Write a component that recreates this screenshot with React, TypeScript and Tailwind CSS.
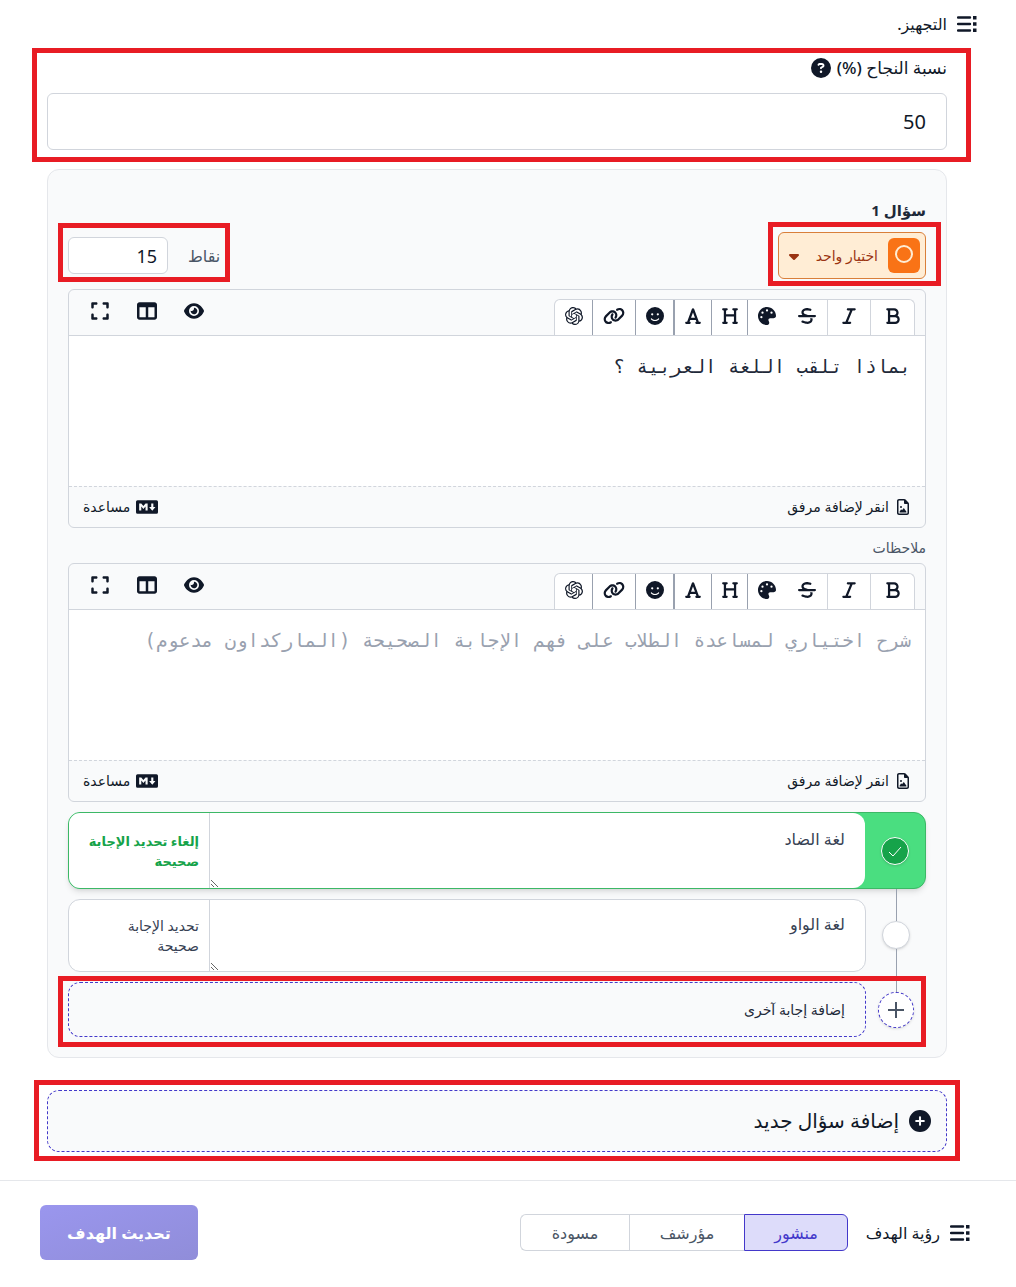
import { useState } from 'react'
import {
  FaBold,
  FaCaretDown,
  FaCirclePlus,
  FaCircleQuestion,
  FaExpand,
  FaEye,
  FaFaceSmile,
  FaFont,
  FaHeading,
  FaItalic,
  FaLink,
  FaPalette,
  FaRegFileImage,
  FaStrikethrough,
  FaTableColumns,
} from 'react-icons/fa6'
import { SiMarkdown, SiOpenai } from 'react-icons/si'

const tools = [
  { label: 'غامق', icon: FaBold, className: 'w-[43px] text-lg' },
  { label: 'مائل', icon: FaItalic, className: 'w-[43px] border-s border-gray-300 text-lg' },
  { label: 'يتوسطه خط', icon: FaStrikethrough, className: 'w-[42px] border-s border-gray-300 text-lg' },
  { label: 'لون', icon: FaPalette, className: 'w-[38px] text-lg' },
  { label: 'عنوان', icon: FaHeading, className: 'w-9 border-s border-gray-400 text-lg' },
  { label: 'خط', icon: FaFont, className: 'w-[37px] border-s border-gray-400 text-lg' },
  { label: 'رموز', icon: FaFaceSmile, className: 'w-[39px] border-s-2 border-gray-400 text-lg' },
  { label: 'رابط', icon: FaLink, className: 'w-[43px] border-s border-gray-400 text-[22px]' },
  { label: 'ذكاء', icon: SiOpenai, className: 'w-[38px] border-s border-gray-400 text-lg' },
]

const views = [
  { label: 'معاينة', icon: FaEye },
  { label: 'أعمدة', icon: FaTableColumns },
  { label: 'ملء الشاشة', icon: FaExpand },
]

const statuses = [
  { value: 'published', label: 'منشور', width: 'w-[104px]' },
  { value: 'archived', label: 'مؤرشف', width: 'w-[115px]' },
  { value: 'draft', label: 'مسودة', width: 'w-[109px]' },
]

function ListIcon() {
  return (
    <svg viewBox="0 0 20 16" className="h-4 w-5 shrink-0" aria-hidden="true">
      <path d="M1 1.5h12M1 8h12M1 14.5h12" stroke="currentColor" strokeWidth="2.4" strokeLinecap="round" />
      <path d="M16 0h3.5v3.5H16zM16 6.25h3.5v3.5H16zM16 12.5h3.5V16H16z" fill="currentColor" />
    </svg>
  )
}

// Red frame drawn over the highlighted part of the form
function Frame({ className }: { className: string }) {
  return <span aria-hidden="true" className={`pointer-events-none absolute z-10 border-5 border-[#e81c24] ${className}`} />
}

function Editor({ label, value, placeholder }: { label: string; value?: string; placeholder?: string }) {
  return (
    <div className="overflow-hidden rounded-md border border-gray-300">
      <div className="flex h-[46px] items-end justify-between border-b border-gray-300 ps-[10px] pe-[21px]">
        <div className="flex h-9 overflow-hidden rounded-t-md border border-b-0 border-gray-300 bg-white">
          {tools.map((tool) => (
            <button
              key={tool.label}
              type="button"
              aria-label={tool.label}
              className={`flex items-center justify-center pb-1 ${tool.className}`}
            >
              <tool.icon />
            </button>
          ))}
        </div>
        <div className="flex gap-[27px] self-start pt-[11px] text-xl">
          {views.map((view) => (
            <button key={view.label} type="button" aria-label={view.label}>
              <view.icon />
            </button>
          ))}
        </div>
      </div>
      <textarea
        aria-label={label}
        defaultValue={value}
        placeholder={placeholder}
        className="block h-[150px] w-full resize-none bg-white px-[14px] pt-[18px] font-['DejaVu_Sans_Mono',monospace] text-[19px] leading-6 text-gray-800 outline-none placeholder:text-gray-400"
      />
      <div className="flex h-[41px] items-center justify-between border-t border-dashed border-gray-300 px-[14px] text-sm font-medium">
        <button type="button" className="flex items-center gap-1.5">
          <FaRegFileImage className="text-base" />
          انقر لإضافة مرفق
        </button>
        <a href="#markdown" className="flex items-center gap-1.5">
          <SiMarkdown className="text-[22px]" />
          مساعدة
        </a>
      </div>
    </div>
  )
}

export default function App() {
  const [status, setStatus] = useState('published')

  return (
    <div dir="rtl" className="bg-white font-['Noto_Sans','DejaVu_Sans',sans-serif] text-gray-900">
      <h2 className="ms-[39px] mt-3 flex h-6 items-center gap-[10px] text-base font-medium">
        <ListIcon />
        التجهيز.
      </h2>

      <main className="ms-[69px] me-[47px] pt-5">
        <div className="relative">
          <Frame className="-start-6 -end-[15px] -top-[8px] -bottom-3" />
          <label htmlFor="rate" className="flex h-6 items-center gap-1.5 text-[17px] font-medium">
            نسبة النجاح (%)
            <FaCircleQuestion className="text-xl" />
          </label>
          <input
            id="rate"
            inputMode="numeric"
            defaultValue="50"
            className="mt-[13px] block h-[57px] w-full rounded-md border border-gray-300 bg-white px-5 text-xl outline-none"
          />
        </div>

        <section className="mt-[19px] rounded-xl border border-gray-200 bg-gray-50 p-5">
          <h3 className="flex h-10 items-center text-[15px] font-bold text-gray-800">سؤال 1</h3>

          <div className="mt-0.5 flex items-center justify-between">
            <div className="relative flex h-[47px] w-[148px] items-center rounded-md border border-[#d97f3a] bg-[#ffedd5] ps-[5px]">
              <Frame className="-start-4 -end-[11px] -top-[11px] -bottom-2" />
              <span className="flex h-[35px] w-8 shrink-0 items-center justify-center rounded-md bg-[#f97316] pb-1">
                <span className="size-[18px] rounded-full border-2 border-orange-100" />
              </span>
              <select
                aria-label="نوع السؤال"
                className="h-full w-full appearance-none bg-transparent ps-[10px] text-sm font-medium text-[#9a3412] outline-none"
              >
                <option>اختيار واحد</option>
                <option>اختيار متعدد</option>
              </select>
              <FaCaretDown className="pointer-events-none absolute end-[7px] text-base text-[#9a3412]" />
            </div>

            <div className="relative flex items-center gap-5">
              <Frame className="-start-[10px] -end-[10px] -top-[14px] -bottom-2" />
              <label htmlFor="points" className="text-base text-gray-600">
                نقاط
              </label>
              <input
                id="points"
                inputMode="numeric"
                defaultValue="15"
                className="h-[37px] w-[100px] rounded-md border border-gray-300 bg-white px-[10px] text-lg outline-none"
              />
            </div>
          </div>

          <div className="mt-[10px]">
            <Editor label="نص السؤال" value="بماذا تلقب اللغة العربية ؟" />
          </div>
          <h4 className="flex h-[35px] items-center pt-1 text-sm font-medium text-gray-600">ملاحظات</h4>
          <Editor
            label="ملاحظات"
            placeholder="شرح اختياري لمساعدة الطلاب على فهم الإجابة الصحيحة (الماركداون مدعوم)"
          />

          <div className="mt-[10px] flex overflow-hidden rounded-xl border border-[#3cb866] bg-[#4ade80] shadow-md">
            <div className="flex w-[60px] shrink-0 items-center justify-center">
              <span className="flex size-7 items-center justify-center rounded-full border border-white bg-[#16a34a] shadow">
                <svg viewBox="0 0 16 16" className="size-4" fill="none" stroke="white" strokeWidth="1">
                  <path d="M2 9l4 4 8-9" />
                </svg>
              </span>
            </div>
            <div className="flex flex-1 rounded-s-xl bg-white">
              <textarea
                aria-label="الإجابة 1"
                defaultValue="لغة الضاد"
                className="block h-[75px] min-w-0 flex-1 resize-y border-e border-gray-300 px-5 pt-4 text-base leading-5 text-gray-700 outline-none"
              />
              <button type="button" className="w-[140px] ps-[10px] pe-3 text-start text-[13px] leading-5 font-bold text-[#16a34a]">
                إلغاء تحديد الإجابة صحيحة
              </button>
            </div>
          </div>

          <div className="flex">
            <div className="flex w-[60px] shrink-0 flex-col items-center">
              <span className="h-8 w-px bg-gray-400" />
              <span className="size-7 rounded-full border border-gray-300 bg-white shadow" />
              <span className="w-px flex-1 bg-gray-400" />
            </div>
            <div className="mt-[10px] flex flex-1 overflow-hidden rounded-xl border border-gray-300 bg-white">
              <textarea
                aria-label="الإجابة 2"
                defaultValue="لغة الواو"
                className="block h-[71px] min-w-0 flex-1 resize-y border-e border-gray-300 px-5 pt-[14px] text-base leading-5 text-gray-700 outline-none"
              />
              <button type="button" className="w-[140px] ps-[10px] pe-5 text-start text-sm leading-5 text-gray-700">
                تحديد الإجابة صحيحة
              </button>
            </div>
          </div>

          <button type="button" className="relative flex w-full text-start">
            <Frame className="start-0 -end-[10px] top-1 -bottom-[10px]" />
            <span className="flex w-[60px] shrink-0 flex-col items-center">
              <span className="h-5 w-px bg-gray-400" />
              <span className="flex size-9 items-center justify-center rounded-full border border-dashed border-[#4338ca] bg-white shadow">
                <svg viewBox="0 0 16 16" className="size-4 text-gray-600" stroke="currentColor" strokeWidth="2">
                  <path d="M8 0v16M0 8h16" />
                </svg>
              </span>
            </span>
            <span className="mt-[10px] flex h-[55px] flex-1 items-center rounded-xl border border-dashed border-[#4338ca] px-5 text-sm text-gray-800">
              إضافة إجابة آخرى
            </span>
          </button>
        </section>

        <button
          type="button"
          className="relative mt-8 flex h-[62px] w-full items-center gap-[10px] rounded-xl border border-dashed border-[#4338ca] bg-gray-50 px-[15px] text-xl font-medium"
        >
          <Frame className="-start-[14px] -end-[14px] -top-[11px] -bottom-[10px]" />
          <FaCirclePlus className="text-[22px]" />
          إضافة سؤال جديد
        </button>
      </main>

      <footer className="mt-7 flex items-center justify-between border-t border-gray-200 ps-[46px] pe-10 pt-6 pb-7">
        <div className="flex items-center">
          <ListIcon />
          <span className="ms-[10px] me-4 w-[76px] text-base font-medium whitespace-nowrap">رؤية الهدف</span>
          <div role="radiogroup" aria-label="رؤية الهدف" className="flex">
            {statuses.map((item) => (
              <label
                key={item.value}
                className={`flex h-[37px] cursor-pointer items-center justify-center border text-base first:rounded-s-md last:rounded-e-md ${item.width} ${
                  status === item.value
                    ? 'border-[#4338ca] bg-[#dddcfa] font-medium text-[#4338ca]'
                    : 'border-s-0 border-gray-300 text-gray-600'
                }`}
              >
                <input
                  type="radio"
                  name="status"
                  value={item.value}
                  checked={status === item.value}
                  onChange={() => setStatus(item.value)}
                  className="sr-only"
                />
                {item.label}
              </label>
            ))}
          </div>
        </div>
        <button
          type="button"
          className="h-[55px] w-[158px] rounded-md bg-linear-to-br from-[#9a96ee] to-[#908dd9] text-base font-bold text-white"
        >
          تحديث الهدف
        </button>
      </footer>
    </div>
  )
}
